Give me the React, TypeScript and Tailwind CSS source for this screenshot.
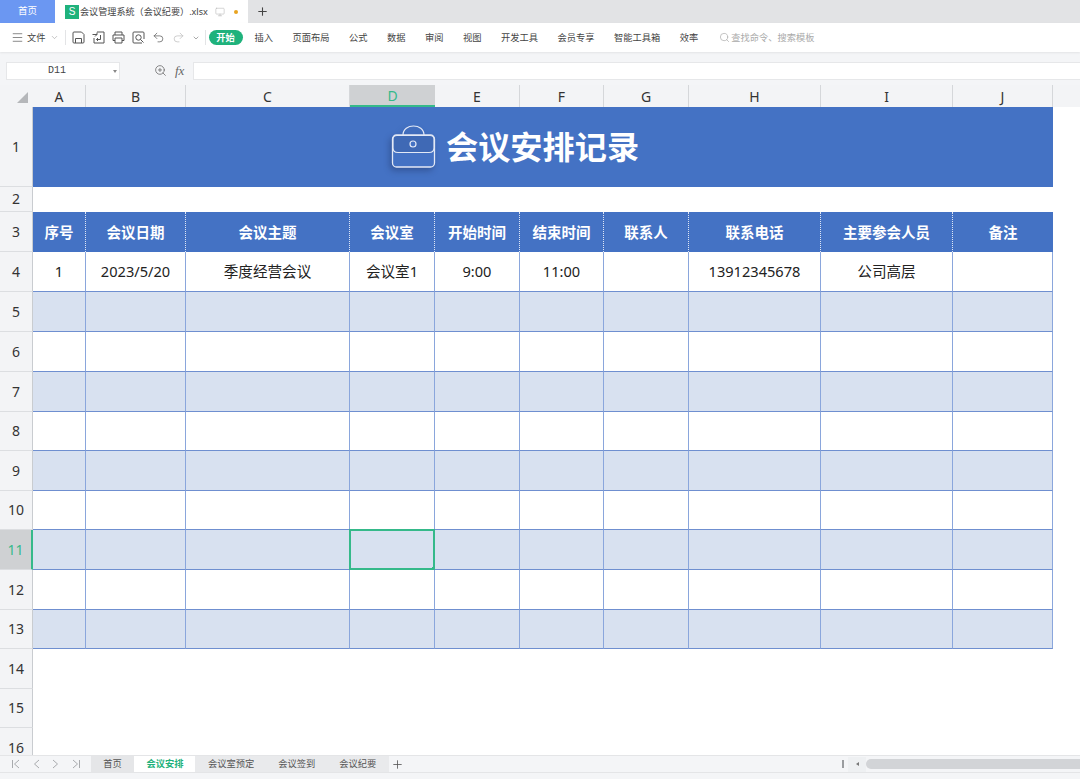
import { ChevronDown, Menu, Monitor, Plus, Redo2, Search, Undo2, ZoomIn } from 'lucide-react';

const ribbonTabs = ['插入', '页面布局', '公式', '数据', '审阅', '视图', '开发工具', '会员专享', '智能工具箱', '效率'];

const columns = [
  { label: 'A', width: 'w-[53px]' },
  { label: 'B', width: 'w-[100px]' },
  { label: 'C', width: 'w-[164px]' },
  { label: 'D', width: 'w-[85px]' },
  { label: 'E', width: 'w-[85px]' },
  { label: 'F', width: 'w-[84px]' },
  { label: 'G', width: 'w-[85px]' },
  { label: 'H', width: 'w-[132px]' },
  { label: 'I', width: 'w-[132px]' },
  { label: 'J', width: 'w-[100px]' },
];

const headers = ['序号', '会议日期', '会议主题', '会议室', '开始时间', '结束时间', '联系人', '联系电话', '主要参会人员', '备注'];
const firstRow = ['1', '2023/5/20', '季度经营会议', '会议室1', '9:00', '11:00', '', '13912345678', '公司高层', ''];

const bodyRows = [
  { n: 4, h: 'h-[40px]', cells: firstRow },
  { n: 5, h: 'h-[40px]' },
  { n: 6, h: 'h-[40px]' },
  { n: 7, h: 'h-[40px]' },
  { n: 8, h: 'h-[39px]' },
  { n: 9, h: 'h-[40px]' },
  { n: 10, h: 'h-[39px]' },
  { n: 11, h: 'h-[40px]' },
  { n: 12, h: 'h-[40px]' },
  { n: 13, h: 'h-[39px]' },
];

const sheets = ['会议室预定', '会议签到', '会议纪要'];

function RowHeader({ n, h, active }: { n: number; h: string; active?: boolean }) {
  return (
    <div
      className={`${h} w-[33px] shrink-0 flex items-center justify-center border-b border-b-[#dcdee1] text-[14px] leading-none ${
        active ? 'bg-[#cfd1d3] text-[#35b98a] border-r-2 border-r-[#35b98a]' : 'bg-[#f3f4f6] text-[#333] border-r border-r-[#c9ccd0]'
      }`}
    >
      {n}
    </div>
  );
}

function Briefcase() {
  return (
    <svg width="46" height="44" viewBox="0 0 46 44" fill="none" className="shrink-0 drop-shadow-[-2px_3px_3px_rgba(30,50,100,0.45)]">
      <path d="M13 10 C13 -2 34 -2 34 10" stroke="#e3e9f6" strokeWidth="1.2" />
      <rect x="2.5" y="10" width="42" height="32" rx="4" fill="#4472c4" stroke="#e3e9f6" strokeWidth="1.3" />
      <path d="M3 14 C3 11.5 5 10.5 7 10.5 H40 C42.5 10.5 44 12 44 14 V23 C44 26 42 27.5 39 27.5 H8 C5 27.5 3 26 3 23 Z" fill="#3f69b5" stroke="#e3e9f6" strokeWidth="1.2" />
      <circle cx="23" cy="19" r="3" stroke="#e3e9f6" strokeWidth="1.2" fill="#4472c4" />
    </svg>
  );
}

function SaveIcon() {
  return (
    <svg width="13" height="13" viewBox="0 0 13 13" fill="none" stroke="#555" strokeWidth="1">
      <path d="M1 2 a1 1 0 0 1 1-1 H9.5 L12 3.5 V11 a1 1 0 0 1-1 1 H2 a1 1 0 0 1-1-1 Z" />
      <path d="M3.5 12 V7.5 H9.5 V12" />
    </svg>
  );
}

function ImportIcon() {
  return (
    <svg width="13" height="13" viewBox="0 0 13 13" fill="none" stroke="#555" strokeWidth="1">
      <path d="M5 1 H12 V12 H2 V7" />
      <path d="M0.5 3.5 H5 V1.5 M5 3.5 L3 5.5" />
      <path d="M8.5 4 V8.5 H4.5 M4.5 8.5 L6 7 M4.5 8.5 L6 10" />
    </svg>
  );
}

function PrintIcon() {
  return (
    <svg width="13" height="13" viewBox="0 0 13 13" fill="none" stroke="#555" strokeWidth="1">
      <path d="M3 4 V1 H10 V4" />
      <path d="M3 9.5 H1 V4 H12 V9.5 H10" />
      <path d="M3 7 H10 V12 H3 Z" />
    </svg>
  );
}

function PreviewIcon() {
  return (
    <svg width="13" height="13" viewBox="0 0 13 13" fill="none" stroke="#555" strokeWidth="1">
      <path d="M10 12 H2 a1 1 0 0 1-1-1 V2 a1 1 0 0 1 1-1 H11 a1 1 0 0 1 1 1 V8" />
      <circle cx="6.5" cy="6.5" r="2.7" />
      <path d="M8.5 8.5 L11.5 11.5" />
    </svg>
  );
}

function NavIcon({ dir, bar }: { dir: 'left' | 'right'; bar?: boolean }) {
  return (
    <svg width="8" height="10" viewBox="0 0 8 10" fill="none" stroke="#a8aaad" strokeWidth="1">
      {dir === 'left' ? <path d="M7 1 L2.5 5 L7 9" /> : <path d="M1 1 L5.5 5 L1 9" />}
      {bar && (dir === 'left' ? <path d="M0.5 1 V9" /> : <path d="M7.5 1 V9" />)}
    </svg>
  );
}

export default function App() {
  return (
    <div className="w-[1080px] h-[779px] flex flex-col overflow-hidden bg-white font-['Noto_Sans','Noto_Sans_CJK_SC',sans-serif]">
      {/* Tab bar */}
      <div className="h-[23px] shrink-0 flex items-stretch bg-[#e2e3e5]">
        <div className="w-[55px] flex items-center justify-center bg-[#6b97f2] text-white text-[9.5px]">首页</div>
        <div className="w-[193px] flex items-center pl-[10px] bg-white text-[#444] text-[9.1px]">
          <span className="w-[14px] h-[14px] mr-[1px] flex items-center justify-center bg-[#1fb27c] text-white text-[10px] leading-none font-['Liberation_Sans',sans-serif]">S</span>
          <span>会议管理系统（会议纪要）.xlsx</span>
          <Monitor className="ml-[7px] w-[10px] h-[10px] text-[#bbb]" strokeWidth={1.5} />
          <span className="ml-[9px] w-[4px] h-[4px] rounded-full bg-[#e8a320]" />
        </div>
        <div className="w-[29px] flex items-center justify-center">
          <Plus className="w-[13px] h-[13px] text-[#444]" strokeWidth={2} />
        </div>
      </div>

      {/* Ribbon */}
      <div className="h-[29px] shrink-0 flex items-center bg-white text-[9.25px] text-[#444] shadow-[0_1px_2px_rgba(0,0,0,0.07)] z-10">
        <Menu className="ml-[11px] w-[13px] h-[13px] text-[#666]" strokeWidth={1.4} />
        <span className="ml-[3px]">文件</span>
        <ChevronDown className="ml-[4px] w-[9px] h-[9px] text-[#999]" strokeWidth={1.5} />
        <div className="ml-[6px] w-px h-[15px] bg-[#e3e4e6]" />
        <div className="ml-[6px] flex items-center gap-[7px] text-[#555]">
          <SaveIcon />
          <ImportIcon />
          <PrintIcon />
          <PreviewIcon />
          <Undo2 className="w-[13px] h-[13px]" strokeWidth={1.3} />
          <Redo2 className="w-[13px] h-[13px] text-[#bbb]" strokeWidth={1.3} />
          <ChevronDown className="w-[8px] h-[8px]" strokeWidth={1.5} />
        </div>
        <div className="ml-[5px] w-px h-[15px] bg-[#e3e4e6]" />
        <span className="ml-[3px] w-[34px] h-[15px] flex items-center justify-center rounded-full bg-[#1fb27c] text-white font-bold">开始</span>
        <div className="ml-[12px] flex items-center gap-[19.5px]">
          {ribbonTabs.map((t) => (
            <span key={t}>{t}</span>
          ))}
        </div>
        <Search className="ml-[21px] w-[11px] h-[11px] text-[#aaa]" strokeWidth={1.5} />
        <span className="ml-[1px] text-[#aaa]">查找命令、搜索模板</span>
      </div>

      {/* Formula bar */}
      <div className="h-[33px] shrink-0 flex items-center bg-[#f4f5f7] pt-[4px]">
        <div className="ml-[6px] w-[114px] h-[18px] relative flex items-center justify-center pr-[12px] bg-white border border-[#e6e7e9] text-[10px] text-[#444] font-['Liberation_Mono',monospace]">
          D11
          <span className="absolute right-[2px] top-[7px] w-0 h-0 border-x-[2px] border-t-[3px] border-x-transparent border-t-[#888]" />
        </div>
        <ZoomIn className="ml-[34px] w-[13px] h-[13px] text-[#666]" strokeWidth={1.4} />
        <span className="ml-[8px] w-[18px] text-[13px] italic text-[#666] font-['Liberation_Serif',serif]">fx</span>
        <div className="flex-1 h-[18px] bg-white border border-[#e6e7e9] border-r-0" />
      </div>

      {/* Sheet */}
      <div className="flex-1 min-h-0 overflow-hidden flex flex-col">
        {/* Column headers */}
        <div className="h-[22px] shrink-0 flex bg-[#f3f4f6] text-[14px] text-[#333]">
          <div className="w-[33px] shrink-0 flex items-end justify-end pr-[5px] pb-[4px]">
            <span className="w-0 h-0 border-l-[11px] border-b-[11px] border-l-transparent border-b-[#b5b7ba]" />
          </div>
          {columns.map((c) => (
            <div
              key={c.label}
              className={`${c.width} shrink-0 flex items-center justify-center ${
                c.label === 'D' ? 'bg-[#cfd1d3] text-[#35b98a] border-b-2 border-[#35b98a]' : 'border-r border-[#d5d7da]'
              }`}
            >
              {c.label}
            </div>
          ))}
        </div>

        {/* Title row */}
        <div className="flex">
          <RowHeader n={1} h="h-[80px]" />
          <div className="w-[1020px] h-[80px] flex items-center pl-[357px] gap-[10px] bg-[#4472c4]">
            <Briefcase />
            <span className="text-white text-[32.2px] leading-none font-bold whitespace-nowrap">会议安排记录</span>
          </div>
        </div>

        <div className="flex">
          <RowHeader n={2} h="h-[25px]" />
          <div className="flex-1" />
        </div>

        {/* Header row */}
        <div className="flex">
          <RowHeader n={3} h="h-[40px]" />
          {columns.map((c, i) => (
            <div
              key={c.label}
              className={`${c.width} h-[40px] pt-[1px] shrink-0 flex items-center justify-center bg-[#4472c4] text-white text-[14.5px] font-bold ${
                i < 9 ? 'border-r border-dotted border-r-[#dfe6f5]' : ''
              }`}
            >
              {headers[i]}
            </div>
          ))}
        </div>

        {/* Body rows */}
        {bodyRows.map((r) => (
          <div key={r.n} className="flex">
            <RowHeader n={r.n} h={r.h} active={r.n === 11} />
            {columns.map((c, i) => (
              <div
                key={c.label}
                className={`${c.width} ${r.h} relative shrink-0 flex items-center justify-center border-r border-b border-r-[#8aa6dc] border-b-[#6f8fd0] text-[14.6px] text-[#222] ${
                  r.n % 2 === 1 ? 'bg-[#d8e1f0]' : 'bg-white'
                }`}
              >
                {r.cells ? r.cells[i] : ''}
                {r.n === 11 && c.label === 'D' && (
                  <>
                    <div className="absolute left-[-1px] top-[-1px] w-[86px] h-[41px] border-2 border-[#35b98a]" />
                    <div className="absolute right-[-2px] bottom-[-2px] w-[4px] h-[4px] bg-[#35b98a]" />
                  </>
                )}
              </div>
            ))}
          </div>
        ))}

        <div className="flex">
          <RowHeader n={14} h="h-[40px]" />
        </div>
        <div className="flex">
          <RowHeader n={15} h="h-[39px]" />
        </div>
        <div className="flex">
          <RowHeader n={16} h="h-[40px]" />
        </div>
      </div>

      {/* Sheet tabs */}
      <div className="h-[17px] shrink-0 flex items-stretch bg-[#f4f5f7] border-t border-[#e4e5e7] text-[9.25px] text-[#555]">
        <div className="w-[91px] flex items-center pl-[12px] gap-[12px]">
          <NavIcon dir="left" bar />
          <NavIcon dir="left" />
          <NavIcon dir="right" />
          <NavIcon dir="right" bar />
        </div>
        <div className="w-[43px] flex items-center justify-center bg-[#e5e6e8]">首页</div>
        <div className="w-[61px] pl-[1px] flex items-center justify-center bg-white text-[#1fb27c] font-bold">会议安排</div>
        <div className="flex items-center bg-[#e9eaec] px-[13px] gap-[24px]">
          {sheets.map((s) => (
            <span key={s}>{s}</span>
          ))}
        </div>
        <div className="w-[16px] flex items-center justify-center">
          <Plus className="w-[13px] h-[13px] text-[#555]" strokeWidth={1.5} />
        </div>
        <div className="ml-auto w-[238px] flex items-center">
          <span className="w-[2px] h-[8px] bg-[#9a9c9f]" />
          <div className="ml-[4px] w-[18px] h-[15px] flex items-center justify-center bg-[#eef0f2]">
            <span className="w-0 h-0 border-y-[2px] border-r-[3px] border-y-transparent border-r-[#777]" />
          </div>
          <div className="flex-1 h-[10px] rounded-l-[5px] bg-[#d2d4d7]" />
        </div>
      </div>
      <div className="h-[7px] shrink-0 bg-[#f4f5f7] border-t border-[#e4e5e7]" />
    </div>
  );
}
